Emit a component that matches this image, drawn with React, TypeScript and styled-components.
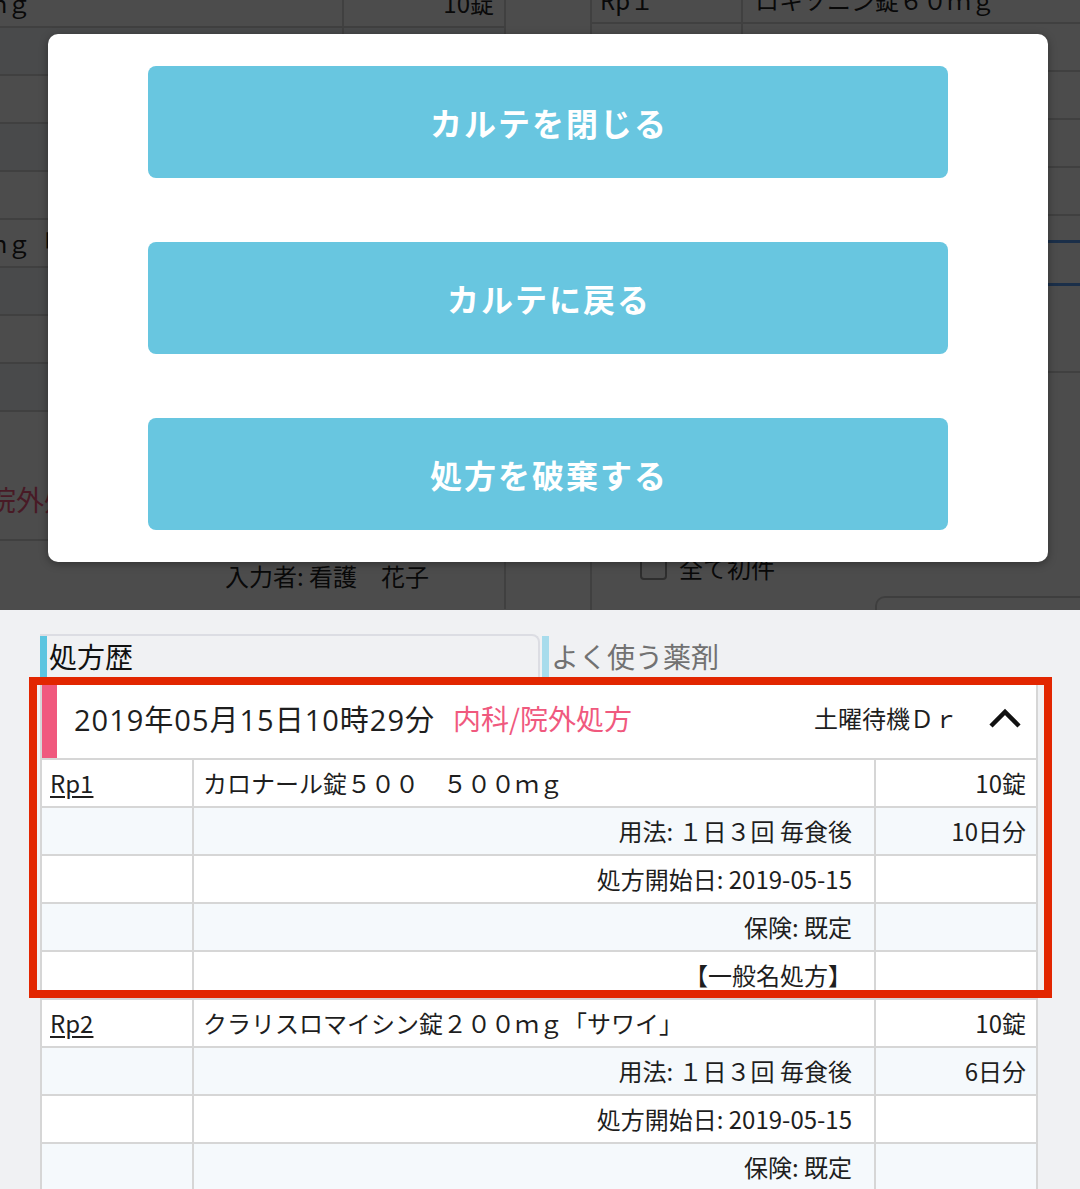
import React, { FC } from "react";
import styled, { createGlobalStyle } from "styled-components";

type Rx = {
  label: string;
  name: string;
  qty: string;
  usage: string;
  days: string;
  start: string;
  insurance: string;
  generic?: boolean;
};

type Visit = {
  date: string;
  dept: string;
  doctor: string;
  author?: string;
  rx: Rx[];
};

const colors = {
  line: "#d6d6d6",
  shade: "#f5f9fc",
  pink: "#f0597e",
  sky: "#68c6e0",
  text: "#1e1e1e",
};

const rxList: Rx[] = [
  {
    label: "Rp1",
    name: "カロナール錠５００　５００ｍｇ",
    qty: "10錠",
    usage: "用法: １日３回 毎食後",
    days: "10日分",
    start: "処方開始日: 2019-05-15",
    insurance: "保険: 既定",
    generic: true,
  },
  {
    label: "Rp2",
    name: "クラリスロマイシン錠２００ｍｇ「サワイ」",
    qty: "10錠",
    usage: "用法: １日３回 毎食後",
    days: "6日分",
    start: "処方開始日: 2019-05-15",
    insurance: "保険: 既定",
    generic: true,
  },
];

const current: Visit = {
  date: "2019年05月15日10時29分",
  dept: "内科/院外処方",
  doctor: "土曜待機Ｄｒ",
  rx: rxList,
};

const previous: Visit = {
  date: "2019年05月08日11時42分",
  dept: "内科/院外処方",
  doctor: "土曜待機Ｄｒ",
  author: "入力者: 看護　花子",
  rx: [],
};

const GlobalStyle = createGlobalStyle`
  html, body {
    margin: 0;
    padding: 0;
  }

  body {
    font-family: "Noto Sans CJK JP", "Noto Sans", sans-serif;
    color: ${colors.text};
  }

  * {
    box-sizing: border-box;
  }
`;

const Page = styled.div`
  width: 1080px;
  height: 1189px;
  overflow: hidden;
  background: #f0f1f3;
`;

/* ---------- dimmed page behind the dialog ---------- */

const Backdrop = styled.div`
  position: relative;
  height: 610px;
  overflow: hidden;
`;

const UnderPage = styled.div`
  display: flex;
  align-items: flex-start;
  height: 100%;
  background: #fff;
`;

const UnderLeft = styled.div`
  width: 506px;
  height: 100%;
  flex-shrink: 0;
  overflow: hidden;

  .scrolled {
    width: 998px;
    margin-left: -492px;
    margin-top: -103px;
  }
`;

const UnderRight = styled.div`
  flex: 1;
  height: 100%;
  margin-left: 84px;
  border-left: 2px solid ${colors.line};
`;

const MedRow = styled.div<{ $first?: boolean }>`
  display: grid;
  grid-template-columns: 149px 1fr;
  height: 48px;
  margin-top: ${({ $first }) => ($first ? "-24px" : "0")};
  border-bottom: 2px solid ${colors.line};
  font-size: 24px;

  & > div {
    display: flex;
    align-items: center;
    padding-left: 8px;
  }

  & > div + div {
    border-left: 2px solid ${colors.line};
    padding-left: 12px;
  }
`;

const DoseInput = styled.div`
  height: 46px;
  margin-top: 24px;
  border-top: 3px solid #5b9df5;
  border-bottom: 3px solid #5b9df5;
`;

const FormBlock = styled.div`
  height: 87px;
  border-bottom: 2px solid ${colors.line};
`;

const CheckRow = styled.label`
  display: flex;
  align-items: center;
  gap: 12px;
  margin-top: 183px;
  padding-left: 48px;
  font-size: 24px;
  line-height: 1;

  .box {
    width: 27px;
    height: 24px;
    border: 2px solid #9a9a9a;
    border-radius: 4px;
  }
`;

const MemoBox = styled.div`
  height: 60px;
  margin: 16px 0 0 283px;
  border: 2px solid #cfcfcf;
  border-right: none;
  border-radius: 10px 0 0 10px;
`;

const Overlay = styled.div`
  position: absolute;
  inset: 0;
  background: rgba(0, 0, 0, 0.7);
`;

const Dialog = styled.div`
  position: absolute;
  top: 34px;
  left: 48px;
  width: 1000px;
  display: flex;
  flex-direction: column;
  gap: 64px;
  padding: 32px 100px;
  background: #fff;
  border-radius: 10px;
  box-shadow: 0 2px 8px rgba(0, 0, 0, 0.35);
`;

const DialogButton = styled.button`
  height: 112px;
  border: none;
  border-radius: 8px;
  background: ${colors.sky};
  color: #fff;
  font-family: inherit;
  font-size: 32px;
  font-weight: 700;
  letter-spacing: 2px;
  text-indent: 2px;
  cursor: pointer;
`;

/* ---------- history ---------- */

const History = styled.section`
  padding: 24px 0 0 40px;
`;

const TabBar = styled.div`
  display: flex;
  gap: 2px;
  height: 43px;
`;

const Tab = styled.div<{ $active?: boolean }>`
  display: flex;
  align-items: stretch;
  width: ${({ $active }) => ($active ? "500px" : "auto")};
  border-top: 2px solid ${({ $active }) => ($active ? "#dcdde3" : "transparent")};
  border-right: 2px solid ${({ $active }) => ($active ? "#dcdde3" : "transparent")};
  border-top-right-radius: 8px;
  font-size: 28px;
  color: ${({ $active }) => ($active ? "#111" : "#727272")};

  .marker {
    width: 7px;
    margin-right: 2px;
    background: ${({ $active }) => ($active ? "#5cc5e0" : "#a8dcec")};
  }

  .label {
    display: flex;
    align-items: center;
    line-height: 1;
    padding-bottom: 2px;
  }
`;

const Card = styled.div`
  width: 998px;
  background: #fff;
  border-left: 2px solid ${colors.line};
  border-right: 2px solid ${colors.line};
`;

const CardHeader = styled.div`
  display: flex;
  align-items: center;
  height: 81px;
  padding-right: 14px;

  .bar {
    align-self: stretch;
    width: 15px;
    background: ${colors.pink};
  }

  .date {
    margin-left: 17px;
    font-family: "Open Sans", "Noto Sans CJK JP", sans-serif;
    font-size: 29px;
    letter-spacing: 1px;
  }

  .dept {
    margin-left: 18px;
    font-size: 28px;
    color: ${colors.pink};
  }

  .doctor {
    margin-left: auto;
    font-size: 24px;
  }

  svg {
    margin-left: 30px;
  }
`;

const Marked = styled.div`
  position: relative;
`;

const Annotation = styled.div`
  position: absolute;
  top: 0;
  left: -13px;
  right: -16px;
  bottom: 0;
  border: 8px solid #e22600;
  pointer-events: none;
`;

const Row = styled.div<{ $shaded?: boolean }>`
  display: grid;
  grid-template-columns: 150px 682px 162px;
  height: 48px;
  border-top: 2px solid ${colors.line};
  background: ${({ $shaded }) => ($shaded ? colors.shade : "#fff")};
  font-size: 24px;
  line-height: 1.2;
`;

const Cell = styled.div<{ $align?: "left" | "right"; $pad?: string }>`
  display: flex;
  align-items: center;
  justify-content: ${({ $align }) => ($align === "right" ? "flex-end" : "flex-start")};
  padding: ${({ $pad }) => $pad || "0 8px"};
  white-space: nowrap;

  & + & {
    border-left: 2px solid ${colors.line};
  }
`;

const RpLink = styled.a`
  color: ${colors.text};
  text-decoration: underline;
  text-underline-offset: 3px;
  text-decoration-thickness: 2px;
`;

const AuthorRow = styled.div`
  display: flex;
  align-items: center;
  height: 70px;
  padding-left: 715px;
  border-top: 2px solid ${colors.line};
  font-size: 24px;
`;

const Chevron: FC = () => (
  <svg width="34" height="22" viewBox="0 0 34 22">
    <polyline
      points="3,19 17,5 31,19"
      fill="none"
      stroke="#111"
      strokeWidth="4.5"
    />
  </svg>
);

const RxRows: FC<{ rx: Rx }> = ({ rx }) => {
  const details: { text: string; extra?: string }[] = [
    { text: rx.usage, extra: rx.days },
    { text: rx.start },
    { text: rx.insurance },
  ];
  if (rx.generic) details.push({ text: "【一般名処方】" });

  return (
    <>
      <Row>
        <Cell>
          <RpLink>{rx.label}</RpLink>
        </Cell>
        <Cell $pad="0 9px">{rx.name}</Cell>
        <Cell $align="right" $pad="0 10px">
          {rx.qty}
        </Cell>
      </Row>

      {details.map((d, i) => (
        <Row key={i} $shaded={i % 2 === 0}>
          <Cell />
          <Cell $align="right" $pad="0 22px 0 9px">
            {d.text}
          </Cell>
          <Cell $align="right" $pad="0 10px">
            {d.extra}
          </Cell>
        </Row>
      ))}
    </>
  );
};

const VisitCard: FC<{ visit: Visit; highlight?: boolean }> = ({
  visit,
  highlight,
}) => {
  const [first, ...rest] = visit.rx;

  const top = (
    <>
      <CardHeader>
        <span className="bar" />
        <span className="date">{visit.date}</span>
        <span className="dept">{visit.dept}</span>
        <span className="doctor">{visit.doctor}</span>
        <Chevron />
      </CardHeader>
      {visit.author && <AuthorRow>{visit.author}</AuthorRow>}
      {first && <RxRows rx={first} />}
    </>
  );

  return (
    <Card>
      {highlight ? (
        <Marked>
          {top}
          <Annotation />
        </Marked>
      ) : (
        top
      )}
      {rest.map((rx) => (
        <RxRows key={rx.label} rx={rx} />
      ))}
    </Card>
  );
};

export default function App() {
  return (
    <Page>
      <GlobalStyle />

      <Backdrop>
        <UnderPage>
          <UnderLeft>
            <div className="scrolled">
              <VisitCard visit={current} />
              <VisitCard visit={previous} />
            </div>
          </UnderLeft>

          <UnderRight>
            <MedRow $first>
              <div>Rp１</div>
              <div>ロキソニン錠６０ｍｇ</div>
            </MedRow>
            <MedRow>
              <div />
              <div />
            </MedRow>
            <MedRow>
              <div />
              <div />
            </MedRow>
            <MedRow>
              <div />
              <div />
            </MedRow>
            <MedRow>
              <div />
              <div />
            </MedRow>
            <DoseInput />
            <FormBlock />
            <CheckRow>
              <span className="box" />
              全て初件
            </CheckRow>
            <MemoBox />
          </UnderRight>
        </UnderPage>

        <Overlay />

        <Dialog>
          <DialogButton>カルテを閉じる</DialogButton>
          <DialogButton>カルテに戻る</DialogButton>
          <DialogButton>処方を破棄する</DialogButton>
        </Dialog>
      </Backdrop>

      <History>
        <TabBar>
          <Tab $active>
            <span className="marker" />
            <span className="label">処方歴</span>
          </Tab>
          <Tab>
            <span className="marker" />
            <span className="label">よく使う薬剤</span>
          </Tab>
        </TabBar>

        <VisitCard visit={current} highlight />
      </History>
    </Page>
  );
}
